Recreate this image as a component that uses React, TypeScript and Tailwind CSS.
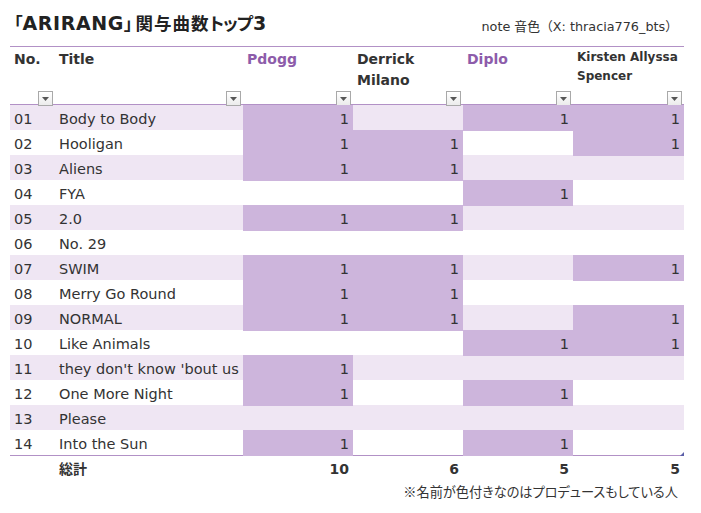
import React from "react";

type Row = { no: string; title: string; cells: (number | null)[] };

const rows: Row[] = [
  { no: "01", title: "Body to Body", cells: [1, null, 1, 1] },
  { no: "02", title: "Hooligan", cells: [1, 1, null, 1] },
  { no: "03", title: "Aliens", cells: [1, 1, null, null] },
  { no: "04", title: "FYA", cells: [null, null, 1, null] },
  { no: "05", title: "2.0", cells: [1, 1, null, null] },
  { no: "06", title: "No. 29", cells: [null, null, null, null] },
  { no: "07", title: "SWIM", cells: [1, 1, null, 1] },
  { no: "08", title: "Merry Go Round", cells: [1, 1, null, null] },
  { no: "09", title: "NORMAL", cells: [1, 1, null, 1] },
  { no: "10", title: "Like Animals", cells: [null, null, 1, 1] },
  { no: "11", title: "they don't know 'bout us", cells: [1, null, null, null] },
  { no: "12", title: "One More Night", cells: [1, null, 1, null] },
  { no: "13", title: "Please", cells: [null, null, null, null] },
  { no: "14", title: "Into the Sun", cells: [1, null, 1, null] },
];

const totals = [10, 6, 5, 5];

// Excel-style filter button
function FilterButton() {
  return (
    <div className="w-[15px] h-[15px] border border-[#a9a9a9] bg-gradient-to-b from-white to-[#ececec] flex items-center justify-center self-end">
      <svg width="7" height="4" viewBox="0 0 7 4">
        <path d="M0 0 L7 0 L3.5 4 Z" fill="#555" />
      </svg>
    </div>
  );
}

const grid = "grid grid-cols-[45px_188px_110px_110px_110px_111px] w-[674px]";
const cjk = "font-['Noto_Sans_CJK_JP',sans-serif] [font-feature-settings:'palt']";

export default function App() {
  return (
    <div
      className="w-[701px] h-[513px] bg-white px-[10px] text-[#333]"
      style={{ fontFamily: '"DejaVu Sans", "Noto Sans CJK JP", sans-serif' }}
    >
      {/* Title line */}
      <div className="flex items-end justify-between w-[674px] h-[46px] pb-[9px]">
        <div className="flex items-baseline font-bold text-[#222] pl-[4px]">
          <span className={`${cjk} text-[17px]`}>「</span>
          <span className="text-[19px] tracking-[0.6px]">ARIRANG</span>
          <span className={`${cjk} text-[17px] pr-[3px]`}>」</span>
          <span className={`${cjk} text-[17.5px] tracking-[1px]`}>関与曲数</span>
          <span className={`${cjk} text-[17.5px] tracking-[-1px]`}>トップ</span>
          <span className="text-[19px] pl-[1px]">3</span>
        </div>
        <div className="text-[12.8px] text-[#333] pr-[6px] pb-[1px]">note 音色（X: thracia776_bts）</div>
      </div>

      {/* Header */}
      <div className={`${grid} h-[59px] border-t border-b border-[#b291c6] font-bold text-[14px]`}>
        <div className="flex flex-col justify-between pl-1 pr-[2px] pt-[2px] pb-[1px]">
          <span>No.</span>
          <FilterButton />
        </div>
        <div className="flex flex-col justify-between pl-1 pr-[2px] pt-[2px] pb-[1px]">
          <span>Title</span>
          <FilterButton />
        </div>
        <div className="flex flex-col justify-between pl-1 pr-[2px] pt-[2px] pb-[1px]">
          <span className="text-[#8d5caa]">Pdogg</span>
          <FilterButton />
        </div>
        <div className="flex flex-col justify-between pl-1 pr-[2px] pt-[2px] pb-[1px]">
          <span className="leading-[21px]">Derrick<br />Milano</span>
          <FilterButton />
        </div>
        <div className="flex flex-col justify-between pl-1 pr-[2px] pt-[2px] pb-[1px]">
          <span className="text-[#8d5caa]">Diplo</span>
          <FilterButton />
        </div>
        <div className="flex flex-col justify-between pl-1 pr-[2px] pt-[1px] pb-[1px]">
          <span className="text-[12px] leading-[19px] whitespace-nowrap">Kirsten Allyssa<br />Spencer</span>
          <FilterButton />
        </div>
      </div>

      {/* Body */}
      <div className="text-[14.5px]">
        {rows.map((r, i) => {
          const striped = i % 2 === 0;
          const base = striped ? "bg-[#efe6f3]" : "bg-white";
          return (
            <div key={r.no} className={`${grid} h-[25px] ${base}`}>
              <div className="flex items-center pl-1 pt-[4px]">{r.no}</div>
              <div className="flex items-center pl-1 pt-[4px] whitespace-nowrap">{r.title}</div>
              {r.cells.map((c, j) => (
                <div
                  key={j}
                  className={`relative flex items-center justify-end pr-1 pt-[4px] ${c ? "bg-[#cdb5dc]" : ""}`}
                >
                  {c ?? ""}
                  {i === rows.length - 1 && j === 3 && (
                    <span className="absolute right-0 bottom-0 w-0 h-0 border-l-[4px] border-b-[4px] border-l-transparent border-b-[#5b5fa8]" />
                  )}
                </div>
              ))}
            </div>
          );
        })}
      </div>

      {/* Totals */}
      <div className={`${grid} h-[26px] border-t border-[#b291c6] font-bold text-[14px]`}>
        <div />
        <div className="flex items-center pl-1 pt-[2px]">総計</div>
        {totals.map((t, j) => (
          <div key={j} className="flex items-center justify-end pr-1 pt-[2px]">
            {t}
          </div>
        ))}
      </div>

      {/* Footnote */}
      <div className={`flex justify-end w-[674px] pr-[6px] pt-[1px] text-[13.2px] ${cjk}`}>※名前が色付きなのはプロデュースもしている人</div>
    </div>
  );
}
